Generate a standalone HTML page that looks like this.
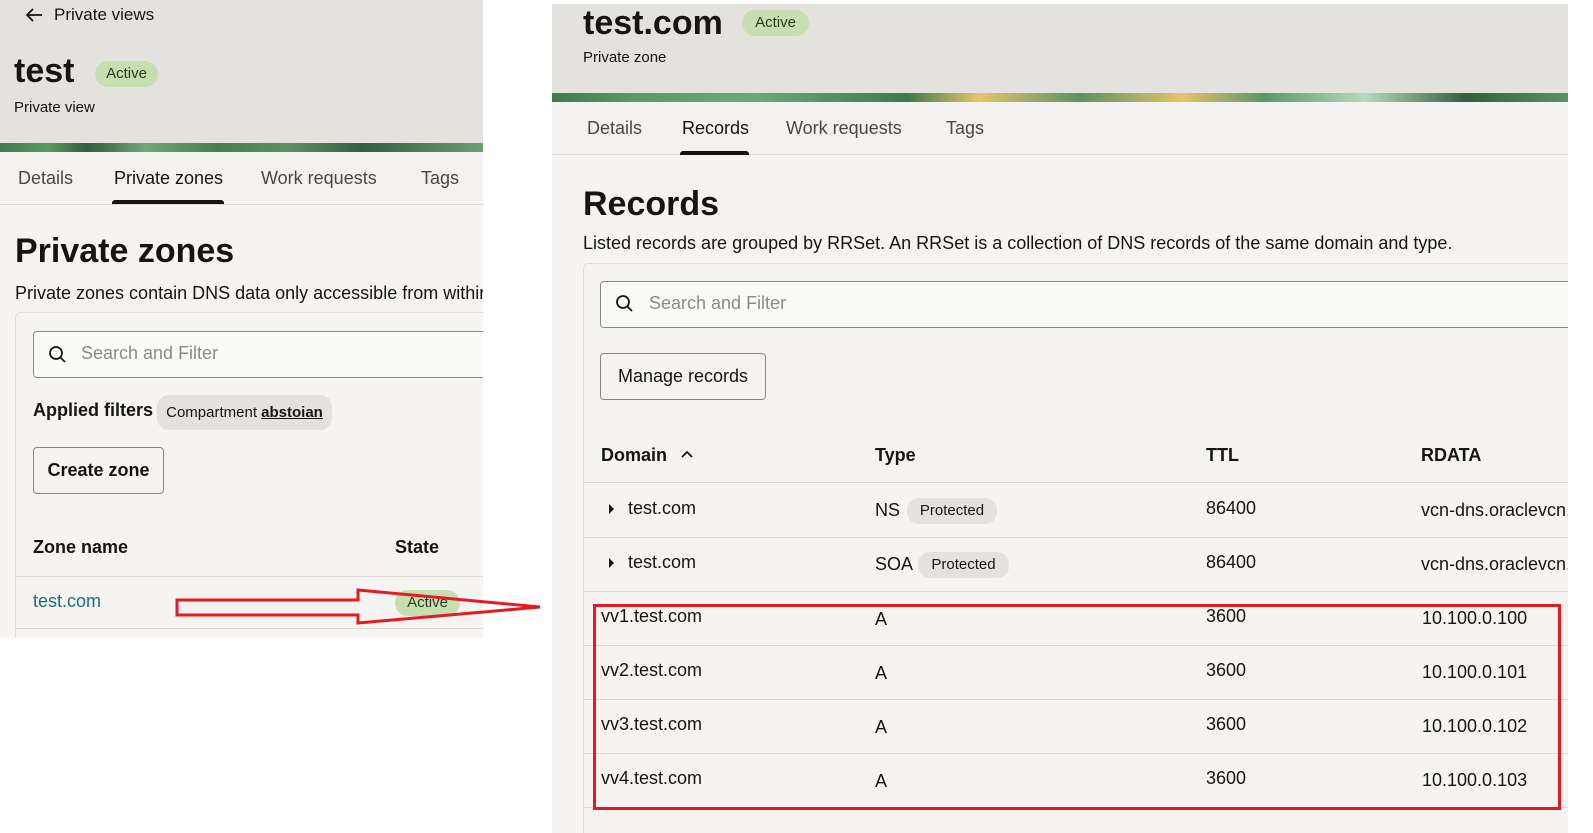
<!DOCTYPE html>
<html><head><meta charset="utf-8"><style>
*{margin:0;padding:0;box-sizing:border-box}
body{width:1593px;height:833px;background:#fff;position:relative;overflow:hidden;font-family:"Liberation Sans",sans-serif;color:#161513}
.a{position:absolute;white-space:nowrap}
.panel{position:absolute;background:#f5f4f2;overflow:hidden}
.hdr{position:absolute;left:0;right:0;top:0;background:#e4e2de}
.ban{position:absolute;left:0;right:0;background:linear-gradient(90deg,#3f7a4c 0,#5a9a63 10%,#2f5e3a 18%,#6fa877 30%,#46804f 45%,#5b9262 60%,#335f3d 75%,#6b9f70 100%)}
.tabs{position:absolute;left:0;right:0;background:#f3f2f0;border-bottom:1px solid #dcdad6}
.tab{position:absolute;font-size:18px;color:#4a4845}
.tab.on{color:#161513}
.ul{position:absolute;height:4px;background:#161513;border-radius:3px 3px 0 0}
.badge{position:absolute;background:#c7dfb0;border-radius:14px;font-size:15px;color:#2a3a1c;text-align:center}
.box{position:absolute;border:1px solid #8a8885;border-radius:4px;background:#fafaf9}
.btn{position:absolute;border:1px solid #8a8885;border-radius:4px;font-size:18px;text-align:center;color:#161513}
.line{position:absolute;height:1px;background:#dcdad6}
.chip{position:absolute;background:#e4e2de;border-radius:12px;font-size:15px;text-align:center}
.t{font-size:18px}
</style></head><body>

<!-- LEFT PANEL -->
<div class="panel" style="left:0;top:0;width:483px;height:638px">
 <div class="hdr" style="height:143px"></div>
 <div class="ban" style="top:143px;height:9px"></div>
 <div class="tabs" style="top:152px;height:53px"></div>
 <svg class="a" style="left:24px;top:7px" width="20" height="16" viewBox="0 0 20 16"><path d="M18 8H3M9 2L3 8l6 6" fill="none" stroke="#161513" stroke-width="1.8"/></svg>
 <div class="a" style="left:54px;top:5px;font-size:17px">Private views</div>
 <div class="a" style="left:14px;top:52px;font-size:34px;font-weight:bold">test</div>
 <div class="badge" style="left:95px;top:61px;width:63px;height:26px;line-height:26px">Active</div>
 <div class="a" style="left:14px;top:99px;font-size:15px">Private view</div>
 <div class="tab" style="left:18px;top:168px">Details</div>
 <div class="tab on" style="left:114px;top:168px">Private zones</div>
 <div class="ul" style="left:112px;top:200px;width:112px"></div>
 <div class="tab" style="left:261px;top:168px">Work requests</div>
 <div class="tab" style="left:421px;top:168px">Tags</div>
 <div class="a" style="left:15px;top:232px;font-size:34px;font-weight:bold">Private zones</div>
 <div class="a" style="left:15px;top:283px;font-size:18px">Private zones contain DNS data only accessible from within a</div>
 <div class="a" style="left:15px;top:312px;width:480px;height:340px;border:1px solid #e0dedb;border-radius:6px"></div>
 <div class="box" style="left:33px;top:331px;width:470px;height:47px"></div>
 <svg class="a" style="left:48px;top:345px" width="20" height="20" viewBox="0 0 20 20"><circle cx="8" cy="8" r="6" fill="none" stroke="#161513" stroke-width="1.8"/><path d="M12.5 12.5L17 17" stroke="#161513" stroke-width="1.8"/></svg>
 <div class="a" style="left:81px;top:343px;font-size:18px;color:#8c8a86">Search and Filter</div>
 <div class="a" style="left:33px;top:400px;font-size:18px;font-weight:bold">Applied filters</div>
 <div class="chip" style="left:157px;top:395px;width:175px;height:35px;line-height:35px">Compartment <u style="font-weight:bold">abstoian</u></div>
 <div class="btn" style="left:33px;top:447px;width:131px;height:47px;line-height:45px;font-weight:bold">Create zone</div>
 <div class="a" style="left:33px;top:537px;font-size:18px;font-weight:bold">Zone name</div>
 <div class="a" style="left:395px;top:537px;font-size:18px;font-weight:bold">State</div>
 <div class="line" style="left:15px;top:576px;width:470px"></div>
 <div class="line" style="left:15px;top:628px;width:470px"></div>
 <div class="a" style="left:33px;top:591px;font-size:18px;color:#1d6a82">test.com</div>
 <div class="badge" style="left:395px;top:590px;width:65px;height:26px;line-height:26px">Active</div>
</div>

<!-- RIGHT PANEL -->
<div class="panel" style="left:552px;top:4px;width:1016px;height:829px">
 <div class="hdr" style="height:89px"></div>
 <div class="ban" style="top:89px;height:9px;background:linear-gradient(90deg,#3f7a4c 0,#5a9a63 8%,#6fa877 20%,#3f7a4c 35%,#e6c46a 42%,#5b9262 52%,#e6c46a 62%,#5d9766 70%,#b6d9bf 80%,#335f3d 90%,#5b9262 100%)"></div>
 <div class="tabs" style="top:98px;height:53px"></div>
 <div class="a" style="left:31px;top:0px;font-size:34px;font-weight:bold">test.com</div>
 <div class="badge" style="left:190px;top:6px;width:67px;height:26px;line-height:26px">Active</div>
 <div class="a" style="left:31px;top:45px;font-size:15px">Private zone</div>
 <div class="tab" style="left:35px;top:114px">Details</div>
 <div class="tab on" style="left:130px;top:114px">Records</div>
 <div class="ul" style="left:128px;top:147px;width:69px"></div>
 <div class="tab" style="left:234px;top:114px">Work requests</div>
 <div class="tab" style="left:394px;top:114px">Tags</div>
 <div class="a" style="left:31px;top:181px;font-size:34px;font-weight:bold">Records</div>
 <div class="a" style="left:31px;top:229px;font-size:18px">Listed records are grouped by RRSet. An RRSet is a collection of DNS records of the same domain and type.</div>
 <div class="a" style="left:31px;top:259px;width:1000px;height:600px;border:1px solid #e0dedb;border-radius:6px"></div>
 <div class="box" style="left:48px;top:277px;width:980px;height:47px"></div>
 <svg class="a" style="left:63px;top:290px" width="20" height="20" viewBox="0 0 20 20"><circle cx="8" cy="8" r="6" fill="none" stroke="#161513" stroke-width="1.8"/><path d="M12.5 12.5L17 17" stroke="#161513" stroke-width="1.8"/></svg>
 <div class="a" style="left:97px;top:289px;font-size:18px;color:#8c8a86">Search and Filter</div>
 <div class="btn" style="left:48px;top:349px;width:166px;height:47px;line-height:45px">Manage records</div>
 <div class="a t" style="left:49px;top:441px;font-weight:bold">Domain</div>
 <svg class="a" style="left:128px;top:445px" width="14" height="10" viewBox="0 0 14 10"><path d="M2 8l5-5 5 5" fill="none" stroke="#161513" stroke-width="1.8"/></svg>
 <div class="a t" style="left:323px;top:441px;font-weight:bold">Type</div>
 <div class="a t" style="left:654px;top:441px;font-weight:bold">TTL</div>
 <div class="a t" style="left:869px;top:441px;font-weight:bold">RDATA</div>
 <div class="line" style="left:31px;top:478px;width:990px"></div>
 <div class="line" style="left:31px;top:533px;width:990px"></div>
 <div class="line" style="left:31px;top:587px;width:990px"></div>
 <div class="line" style="left:31px;top:641px;width:990px"></div>
 <div class="line" style="left:31px;top:695px;width:990px"></div>
 <div class="line" style="left:31px;top:749px;width:990px"></div>
 <div class="line" style="left:31px;top:803px;width:990px"></div>
 <svg class="a" style="left:57px;top:499px" width="6" height="12"><path d="M0 1l5 5-5 5z" fill="#161513"/></svg>
 <div class="a t" style="left:76px;top:494px">test.com</div>
 <div class="a t" style="left:323px;top:496px">NS</div>
 <div class="chip" style="left:355px;top:494px;width:90px;height:26px;line-height:26px">Protected</div>
 <div class="a t" style="left:654px;top:494px">86400</div>
 <div class="a t" style="left:869px;top:496px">vcn-dns.oraclevcn.c</div>
 <svg class="a" style="left:57px;top:553px" width="6" height="12"><path d="M0 1l5 5-5 5z" fill="#161513"/></svg>
 <div class="a t" style="left:76px;top:548px">test.com</div>
 <div class="a t" style="left:323px;top:550px">SOA</div>
 <div class="chip" style="left:366px;top:548px;width:91px;height:26px;line-height:26px">Protected</div>
 <div class="a t" style="left:654px;top:548px">86400</div>
 <div class="a t" style="left:869px;top:550px">vcn-dns.oraclevcn.c</div>

 <div class="a t" style="left:49px;top:602px">vv1.test.com</div><div class="a t" style="left:323px;top:605px">A</div><div class="a t" style="left:654px;top:602px">3600</div><div class="a t" style="left:870px;top:604px">10.100.0.100</div>
 <div class="a t" style="left:49px;top:656px">vv2.test.com</div><div class="a t" style="left:323px;top:659px">A</div><div class="a t" style="left:654px;top:656px">3600</div><div class="a t" style="left:870px;top:658px">10.100.0.101</div>
 <div class="a t" style="left:49px;top:710px">vv3.test.com</div><div class="a t" style="left:323px;top:713px">A</div><div class="a t" style="left:654px;top:710px">3600</div><div class="a t" style="left:870px;top:712px">10.100.0.102</div>
 <div class="a t" style="left:49px;top:764px">vv4.test.com</div><div class="a t" style="left:323px;top:767px">A</div><div class="a t" style="left:654px;top:764px">3600</div><div class="a t" style="left:870px;top:766px">10.100.0.103</div>
</div>

<!-- red box -->
<div class="a" style="left:593px;top:604px;width:968px;height:206px;border:3px solid #e31b23"></div>
<!-- arrow -->
<svg class="a" style="left:0;top:0" width="560" height="640"><path d="M177 600 L358 600 L358 590 L540 607 L358 623 L358 615 L177 615 Z" fill="none" stroke="#e31b23" stroke-width="3"/></svg>
</body></html>
